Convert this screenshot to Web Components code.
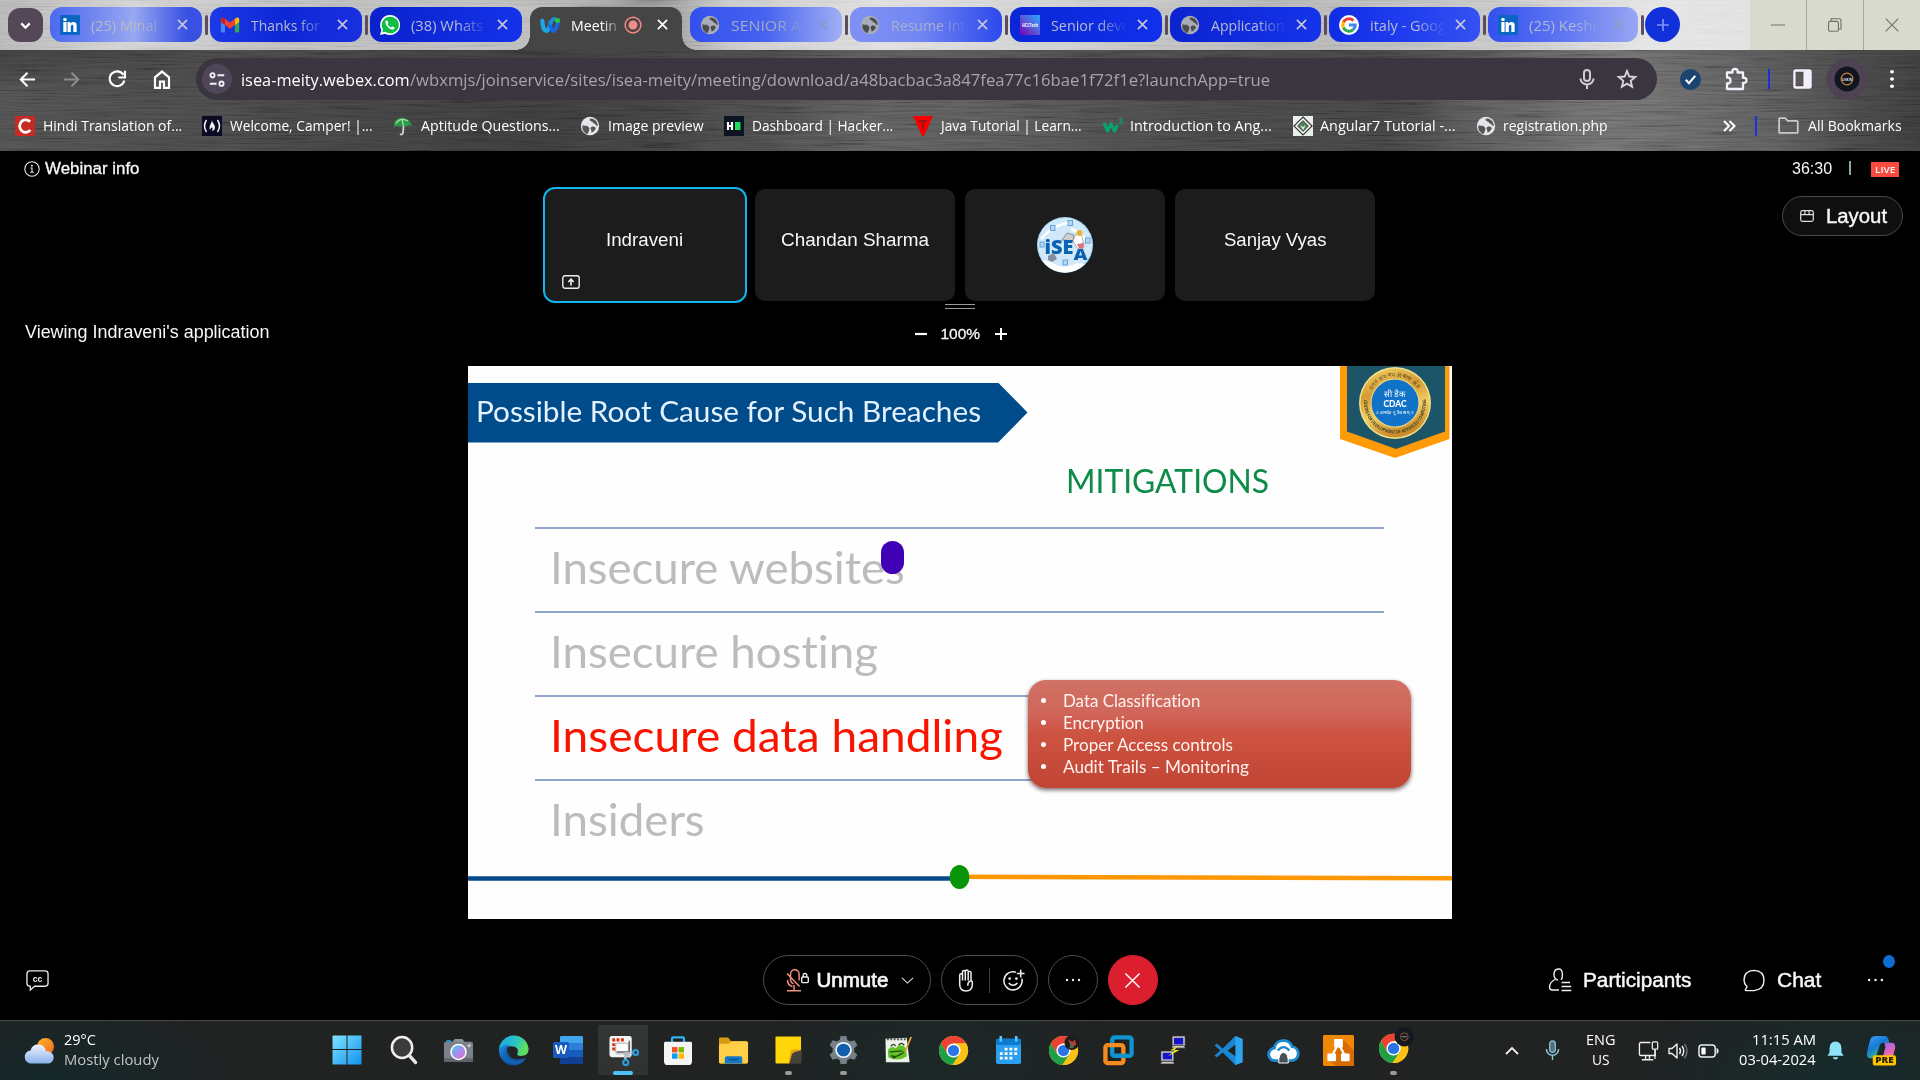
<!DOCTYPE html>
<html lang="en">
<head>
<meta charset="utf-8">
<title>Webex meeting</title>
<style>
html,body{margin:0;background:#000;overflow:hidden}
body{width:1920px;height:1080px;font-family:"Open Sans","Noto Sans",sans-serif;color:#fff}
</style>
</head>
<body>
<desktop-screen></desktop-screen>
<script>
const chromeLogo = (x='') => `<g><circle cx="16" cy="16" r="15" fill="#fbc116"/><path d="M3 8.5A15 15 0 0 1 29 8.5H16L9.5 19.7z" fill="#ea4335"/><path d="M3 8.5A15 15 0 0 0 14.8 31L22.500 19.700 9.500 19.700z" fill="#1fa047"/><path d="M16 8.500H29A15 15 0 0 1 14.800 31L22.500 19.700z" fill="#fbc116"/><circle cx="16" cy="16" r="7.300" fill="#fff"/><circle cx="16" cy="16" r="5.800" fill="#2a74e8"/></g>${x}`;
const globe = c => `<circle cx="12" cy="12" r="11" fill="${c}"/><path d="M3 11c3 1 6 0 7 2s2 2 1 4-1 4-2 4.500C4 20 2 15 3 11zM12 3c-1 2 0 3 2 3.500s1 2 3 2.500 2 3 4.500 3C21 6 17 2.500 12 3zM14 13c2-1 5 0 5 2-1 2-3 4-5 5-1-2 0-3-1-4s0-2.500 1-3z" fill="#3c3c3c" fill-opacity=".85"/>`;
const linkedin = `<rect width="24" height="24" rx="1.500" fill="#0a66c2"/><text x="2.800" y="19.800" font-family="Open Sans" font-weight="800" font-size="20" fill="#fff" textLength="18.500">in</text>`;
/* name: [viewBox, markup] */
const ICONS = {
 down:['0 0 24 24','<path d="M6 9l6 6 6-6" fill="none" stroke="#fff" stroke-width="3"/>'],
 linkedin:['0 0 24 24',linkedin],
 gmail:['0 0 24 24','<path d="M1 5v14.500q0 1.500 1.500 1.500H6V10z" fill="#4285f4"/><path d="M23 5v14.500q0 1.500-1.500 1.500H18V10z" fill="#34a853"/><path d="M18 4.500l2-1.300q3-1 3 2.300v3L18 12z" fill="#fbbc04"/><path d="M6 4.500l6 4.600 6-4.600V12l-6 4.600L6 12z" fill="#ea4335"/><path d="M1 5.500q0-3.300 3-2.300l2 1.300V12L1 8.500z" fill="#c5221f"/>'],
 whatsapp:['0 0 24 24','<path d="M12 0a12 12 0 0 0-10.300 18L0 24l6.200-1.600A12 12 0 1 0 12 0z" fill="#fff"/><path d="M12 2a10 10 0 0 0-8.400 15.300L2.700 21l3.900-1A10 10 0 1 0 12 2z" fill="#12bd45"/><path d="M8.500 6.500c-.9-.4-2.300 1-2 2.700.6 3.200 4.300 7.700 8.300 8.200 1.500.2 2.800-.8 2.900-2.200 0-.5-2.500-1.700-2.900-1.500-.4.200-1 1.300-1.400 1.300-1.200-.2-3.800-2.500-4.200-3.900 0-.4.900-1.100.9-1.600 0-.4-1-2.800-1.600-3z" fill="#fff"/>'],
 webex:['0 0 24 24','<path d="M2.800 7c.2 6 2 12 5 12S11.500 13 12.500 9" fill="none" stroke="#19a7e8" stroke-width="5" stroke-linecap="round"/><path d="M12 11c1 5 2 8 4.500 8S20.500 13 21.500 9" fill="none" stroke="#1766e8" stroke-width="5" stroke-linecap="round"/><path d="M13 10c.8-4 2.500-5.500 5-5.500" fill="none" stroke="#1b8fd8" stroke-width="4" stroke-linecap="round"/><circle cx="21" cy="6.500" r="3" fill="#21cf3f"/>'],
 rec:['0 0 24 24','<circle cx="12" cy="12" r="10.500" fill="none" stroke="#f28b82" stroke-width="2"/><circle cx="12" cy="12" r="6" fill="#f28b82"/>'],
 close:['0 0 12 12','<path d="M1 1l10 10M11 1L1 11" stroke="currentColor" stroke-width="1.900"/>'],
 globeDim:['0 0 24 24',globe('#a9adb8')],
 globe:['0 0 24 24',globe('#e6e6ea')],
 hcl:['0 0 20 20','<defs><linearGradient id="a" x1="0" y1="1" x2="1" y2="0"><stop offset="0" stop-color="#7a00b0"/><stop offset=".5" stop-color="#5a5bd8"/><stop offset="1" stop-color="#28a8ff"/></linearGradient></defs><rect width="20" height="20" fill="url(#a)"/><text x="2" y="12" font-size="4.600" font-weight="700" fill="#fff" textLength="16" lengthAdjust="spacingAndGlyphs">HCLTech</text>'],
 google:['0 0 24 24','<circle cx="12" cy="12" r="12" fill="#fff"/><g fill="none" stroke-width="3.600"><path d="M5.300 8.700A7.500 7.500 0 0 1 17.300 6.700" stroke="#ea4335"/><path d="M5.300 15.300a7.500 7.500 0 0 1 0-6.600" stroke="#fbbc05"/><path d="M5.300 15.300a7.500 7.500 0 0 0 11.700 2.300" stroke="#34a853"/><path d="M12 12h7.500a7.500 7.500 0 0 1-2.500 5.600" stroke="#4285f4"/></g>'],
 plus:['0 0 14 14','<path d="M7 1v12M1 7h12" stroke="#7f92f5" stroke-width="1.700"/>'],
 min:['0 0 14 14','<path d="M0 7h14" stroke="#6f7068" stroke-width="1"/>'],
 max:['0 0 14 14','<rect x=".6" y="3.400" width="9.800" height="9.800" rx="1.500" fill="none" stroke="#6f7068" stroke-width="1.100"/><path d="M3 3V.8h8.500q1.500 0 1.500 1.500V11h-2.500" fill="none" stroke="#6f7068" stroke-width="1.100"/>'],
 winx:['0 0 14 14','<path d="M.7.7l12.600 12.600M13.300.7L.7 13.300" stroke="#6f7068" stroke-width="1.100"/>'],
 back:['0 0 18 18','<path d="M17 9H2M9 1.800L1.800 9 9 16.200" fill="none" stroke="currentColor" stroke-width="2.100"/>'],
 reload:['0 0 18 18','<path d="M15.500 5A7.400 7.400 0 1 0 16.300 10.500" fill="none" stroke="#fff" stroke-width="2.100"/><path d="M17 .8v6.700h-6.700" fill="none" stroke="#fff" stroke-width="2.100"/>'],
 home:['0 0 18 18','<path d="M2 17V7l7-5.600L16 7v10h-5v-6H7v6z" fill="none" stroke="#fff" stroke-width="2.200"/>'],
 tune:['0 0 20 16','<g fill="none" stroke="#f1ecf5" stroke-width="2.100"><circle cx="5" cy="3.500" r="2.300"/><path d="M10.500 3.500H18M2 12.500h7.500"/><circle cx="15" cy="12.500" r="2.300"/></g>'],
 mic:['0 0 16 20','<rect x="5" y="1" width="6" height="11" rx="3" fill="none" stroke="#d0ccd4" stroke-width="2"/><path d="M1.500 9.500a6.500 6 0 0 0 13 0M8 15.500V20" fill="none" stroke="#d0ccd4" stroke-width="2"/>'],
 star:['0 0 20 20','<path d="M10 2l2.300 5.500 6 .5-4.600 3.900 1.400 5.900L10 14.600l-5.100 3.200 1.400-5.900L1.700 8l6-.5z" fill="none" stroke="#d8d4dc" stroke-width="1.900"/>'],
 check:['0 0 20 20','<circle cx="10" cy="10" r="10" fill="#1b4470"/><path d="M5.500 10.300l3 3.200 6-7" fill="none" stroke="#fff" stroke-width="2"/>'],
 puzzle:['0 0 22 22','<path d="M2 4.500h5.500q-.8-3.500 2.500-3.500t2.500 3.500H18v5.300q3.500-.4 3.500 2.500T18 14.800V21H2v-5.500q3.500.2 3.500-3T2 9.500z" fill="none" stroke="#f4effa" stroke-width="2.300" stroke-linejoin="round"/>'],
 panel:['0 0 20 20','<rect x="1.500" y="1.500" width="17" height="17" rx="1.500" fill="none" stroke="#f4effa" stroke-width="2.400"/><rect x="11" y="2" width="7.500" height="16" fill="#f4effa"/>'],
 avatar:['0 0 42 42','<circle cx="21" cy="21" r="20.500" fill="#4d4355"/><circle cx="21" cy="21" r="12.500" fill="#10151f"/><circle cx="21" cy="21" r="5.800" fill="none" stroke="#c8853a" stroke-width="1.200"/><text x="16" y="22.600" font-size="4.200" font-weight="700" fill="#dfe3ea" textLength="10" lengthAdjust="spacingAndGlyphs">LINKIN</text>'],
 kebab:['0 0 6 22','<g fill="#fff"><circle cx="3" cy="3" r="2"/><circle cx="3" cy="11" r="2"/><circle cx="3" cy="19" r="2"/></g>'],
 bC:['0 0 20 20','<rect width="20" height="20" rx="1" fill="#c62a22"/><path d="M15 5.800a6 6.200 0 1 0 .3 8.200" fill="none" stroke="#fff" stroke-width="2.800"/>'],
 fcc:['0 0 20 20','<rect width="20" height="20" fill="#0a0a23"/><path d="M4.500 4q-4 6 0 12M15.500 4q4 6 0 12" fill="none" stroke="#f2f2f2" stroke-width="1.500"/><path d="M10 4c0 3 3 4 3 7.500 0 2-1.500 3.500-3 3.500 1-1.500.5-3 0-4-.7 1.300-1.500 1.200-2 3C6.500 10 9.500 8 10 4z" fill="#f2f2f2"/>'],
 umb:['0 0 20 20','<path d="M1 11C0 5 5 1 10 2c5 .7 8 4 9 8-3-1.500-4.500-.8-5.500 1-2-1.500-3.500-1.500-6-.2C5.500 9.800 3 9.500 1 11z" fill="#2f9a47"/><path d="M3 7.500c3-5 8-5 12-2.500M9 3l1.500 7" stroke="#9fdfa8" stroke-width="1.200" fill="none"/><path d="M10.500 10l-.5 7q-.8 2.500-3 1" fill="none" stroke="#cfd6d0" stroke-width="1.800"/>'],
 hr:['0 0 20 20','<rect width="20" height="20" fill="#0b1420"/><path d="M4 6v8M8 6v8M4 10h4" stroke="#fff" stroke-width="2.200"/><rect x="11" y="6" width="5.500" height="8" fill="#1edc5a"/>'],
 java:['0 0 20 20','<path d="M0 0h20L11 20H9z" fill="#f80000"/><path d="M5.500 5h9M10 5v8" stroke="#a01010" stroke-width="2"/>'],
 w3:['0 0 20 20','<path d="M1 7l3.500 8 3.500-7 3.500 7L14.500 9" fill="none" stroke="#06a46b" stroke-width="3.200" stroke-linejoin="round"/><text x="15.500" y="8" font-size="8" font-weight="700" fill="#06a46b">3</text>'],
 ng:['0 0 20 20','<rect width="20" height="20" fill="#e9efe9"/><path d="M10 1l9 9-9 9-9-9z" fill="#fff" stroke="#333" stroke-width="1.200"/><path d="M10 4.500l5.500 5.500-5.500 5.500L4.500 10z" fill="#4e7d5c" stroke="#222" stroke-width=".7"/><path d="M7 9l3 2 3-2-3 5z" fill="#dff0e0"/>'],
 more:['0 0 12 12','<path d="M1 1l5 5-5 5M6.500 1l5 5-5 5" fill="none" stroke="#fff" stroke-width="2"/>'],
 folder:['0 0 22 18','<path d="M1.200 2.200q0-1 1-1h5.500l2.500 3h9.500q1 0 1 1v10.600q0 1-1 1H2.200q-1 0-1-1z" fill="none" stroke="#c9c9c9" stroke-width="1.900"/>'],
 info:['0 0 16 16','<circle cx="8" cy="8" r="7.200" fill="none" stroke="#e8e8e8" stroke-width="1.100"/><path d="M6.500 7H8v4.200M6.200 11.300h3.600" fill="none" stroke="#e8e8e8" stroke-width="1.100"/><circle cx="7.900" cy="4.700" r=".9" fill="#fff"/>'],
 share:['0 0 18 14','<rect x=".8" y=".8" width="16.400" height="12.400" rx="2.200" fill="none" stroke="#eee" stroke-width="1.400"/><path d="M9 10.500V5M6.300 7L9 4.200 11.700 7" fill="none" stroke="#eee" stroke-width="1.600"/>'],
 isea:['0 0 56 56','<defs><clipPath id="c"><circle cx="28" cy="28" r="27.500"/></clipPath></defs><circle cx="28" cy="28" r="28" fill="#a8d5f3"/><g clip-path="url(#c)"><circle cx="28" cy="28" r="27" fill="#cfe9fa"/><path d="M2 42q10 2 18 6t20-2l14 2v10H2z" fill="#fff"/><path d="M4 22q14-16 30-16M34 12q12 4 16 14" stroke="#fff" stroke-width="2.500" fill="none"/><g fill="#b5d8f4" stroke="#5d9cd8" stroke-width=".9"><rect x="13.500" y="8.500" width="4.500" height="5"/><rect x="31" y="3.500" width="4.500" height="5"/><rect x="48.500" y="21" width="4.500" height="5"/><rect x="3" y="25" width="4" height="5"/><rect x="26" y="43" width="4.500" height="5"/></g><path d="M25 23l5-7 7 2-1 6z" fill="#cfcfcf" stroke="#777" stroke-width=".7"/><path d="M38 19q4-4 7 0l2 11-6 2-5-8z" fill="#fff" stroke="#888" stroke-width=".6"/><circle cx="42.500" cy="16" r="3" fill="#e5b23a"/><path d="M40 27l7-1-1 6-4-1z" fill="#e0707a"/><text x="7.500" y="37" font-family="Open Sans" font-weight="800" font-size="19" fill="#0b62b0" textLength="29" lengthAdjust="spacingAndGlyphs">iSE</text><text x="36.500" y="42.500" font-family="Open Sans" font-weight="800" font-size="16" fill="#0b62b0" textLength="14" lengthAdjust="spacingAndGlyphs">A</text><path d="M11 39l6-3 3 6-5 3-4-2z" fill="#858ea0"/></g>'],
 layout:['0 0 14 12','<g fill="none" stroke="#e0e0e0" stroke-width="1.200"><rect x=".7" y=".7" width="12.600" height="10.600" rx="1.800"/><path d="M.7 4.600h12.600M4.900.7v3.900M9.100.7v3.900"/></g>'],
 minus:['0 0 12 12','<path d="M0 6h12" stroke="#fff" stroke-width="2.200"/>'],
 add:['0 0 12 12','<path d="M0 6h12M6 0v12" stroke="#fff" stroke-width="2"/>'],
 cc:['0 0 24 22','<path d="M4 1h16q3 0 3 3v10q0 3-3 3H9l-4.500 4v-4H4q-3 0-3-3V4q0-3 3-3z" fill="none" stroke="#e8e8e8" stroke-width="1.400"/><text x="7" y="12.300" font-family="Liberation Sans" font-size="10" font-weight="700" fill="#eee" textLength="10" lengthAdjust="spacingAndGlyphs">cc</text>'],
 micoff:['0 0 24 24','<g fill="none" stroke="#f09080" stroke-width="1.500"><path d="M5.500 12V6a4.300 4.300 0 0 1 8.600 0v6.500M5.500 12q.5 3 3 3.800M2.500 12c0 3 2 5.800 5 6.500M9 17v5.500M2 22.700h14M2 5.500l12.500 13"/></g><rect x="16.700" y="9" width="6.600" height="5.600" rx="1" fill="none" stroke="#eee" stroke-width="1.400"/><path d="M18.200 9V7.500a1.800 2 0 0 1 3.600 0V9" fill="none" stroke="#eee" stroke-width="1.300"/>'],
 chev:['0 0 14 8','<path d="M1 1l6 6 6-6" fill="none" stroke="#ddd" stroke-width="1.100"/>'],
 hand:['0 0 16 24','<path d="M1.700 16V6.500q0-1.500 1.400-1.500t1.400 1.500V12V3q0-1.500 1.400-1.500T7.300 3v9-9.500Q7.300 1 8.700 1t1.500 1.500V12 4q0-1.500 1.400-1.500T13 4v8.500q1.500 0 1.300 1.500v3q-.5 6-6.300 6-6.300 0-6.300-7zM12.500 12.500q-3 1-2.700 5" fill="none" stroke="#eee" stroke-width="1.500"/>'],
 smile:['0 0 24 24','<path d="M14.500 3.300A9.500 9.500 0 1 0 20.700 10" fill="none" stroke="#eee" stroke-width="1.600"/><circle cx="8" cy="10" r="1.400" fill="#eee"/><circle cx="15" cy="10" r="1.400" fill="#eee"/><path d="M7 14.500q4.500 5 9 0M19.500.8v8M15.500 4.800h8" fill="none" stroke="#eee" stroke-width="1.600"/>'],
 dots:['0 0 16 4','<g fill="#eee"><circle cx="2" cy="2" r="1.200"/><circle cx="8" cy="2" r="1.200"/><circle cx="14" cy="2" r="1.200"/></g>'],
 leave:['0 0 18 18','<path d="M1.500 1.500l15 15M16.500 1.500l-15 15" stroke="#fff" stroke-width="1.500"/>'],
 person:['0 0 24 24','<g fill="none" stroke="#eee" stroke-width="1.400"><path d="M10 12q-4-1-4-5.800T10.200 1t4.200 5.200-1.600 5M7 11.500q-5.500 3-5.500 7.500 0 3 3 3h6.500"/><path d="M13.500 14.500H22M13.500 18.500h9.800M13.500 22.500h9.800"/></g>'],
 bubble:['0 0 22 24','<path d="M3 22.500q-1 0-.5-1l1.500-3Q1 15.500 1 11.800 1 2 11 1.500q10 .5 10 10.200T11 22.500z" fill="none" stroke="#eee" stroke-width="1.400"/>'],
 weather:['0 0 32 28','<defs><linearGradient id="s" x2="1" y2="1"><stop stop-color="#ffb52b"/><stop offset="1" stop-color="#ee6a1a"/></linearGradient><linearGradient id="w" y1="0" y2="1" x2="0"><stop stop-color="#eef3fd"/><stop offset="1" stop-color="#8bb2ee"/></linearGradient></defs><circle cx="21.500" cy="9.500" r="8.500" fill="url(#s)"/><path d="M7 26.500a6 6.500 0 0 1-.5-13 8 8.500 0 0 1 15.500 1 6 6 0 1 1 3 12z" fill="url(#w)"/>'],
 win:['0 0 30 30','<defs><linearGradient id="g" x2="1" y2="1"><stop stop-color="#7fe3ff"/><stop offset="1" stop-color="#1192ee"/></linearGradient></defs><path d="M1 .5h13.500V14H.5V1zM15.500.5H29q.5 0 .5.500v13h-14zM.5 15h14v14.500H1q-.5 0-.5-.5zM15.500 15h14v14q0 .5-.5.500H15.500z" fill="url(#g)"/>'],
 search:['0 0 30 30','<circle cx="13.500" cy="12.500" r="10.500" fill="#3b3b3b" stroke="#f0f0f0" stroke-width="2.600"/><path d="M21 20.500l6.500 7" stroke="#e5e5e5" stroke-width="3.400" stroke-linecap="round"/>'],
 camera:['0 0 32 28','<defs><linearGradient id="g" x2="1" y2="1"><stop stop-color="#3bd0f0"/><stop offset=".5" stop-color="#a58df0"/><stop offset="1" stop-color="#e070c8"/></linearGradient></defs><path d="M9 6l3-4h8l3 4z" fill="#8b929a"/><path d="M3 5q0-2 3-2t3 2z" fill="#1ab0f0"/><rect x="1" y="5" width="30" height="21" rx="2" fill="#7a8189"/><rect x="1" y="22" width="30" height="4" rx="1.500" fill="#5d646b"/><circle cx="16" cy="15.500" r="8.500" fill="#fff"/><circle cx="16" cy="15.500" r="7" fill="url(#g)"/><path d="M27 7v4M25 9h4" stroke="#ddd"/>'],
 edge:['0 0 32 32','<defs><linearGradient id="a" x2="1" y2=".3"><stop stop-color="#1aa5e4"/><stop offset=".6" stop-color="#2ac5c4"/><stop offset="1" stop-color="#5ee05c"/></linearGradient><linearGradient id="b" x2="0" y2="1"><stop stop-color="#1b8fdd"/><stop offset="1" stop-color="#0f4f9e"/></linearGradient></defs><path d="M1 16A15.300 15.300 0 0 1 31.500 14q.5 6.500-6.500 7.500-6 .5-5-2.500 2-5-3-7-8-2-13 4z" fill="url(#a)"/><path d="M1 15Q5 9 12 10q-4 2-3.500 8 1 9 11 9 5 .2 9-2.500A15.500 15.500 0 0 1 16 31.500 15.500 15.500 0 0 1 1 15z" fill="url(#b)"/><path d="M12 10Q8 13 10.500 19q3 6.500 11 6 4 0 7.500-1.500Q22 33 13 29 3 24 6 15q2-4 6-5z" fill="#0d66c0" fill-opacity=".75"/>'],
 word:['0 0 30 28','<rect x="7" width="23" height="28" rx="1.500" fill="#2d7ed8"/><path d="M7 1.500Q7 0 8.500 0h20Q30 0 30 1.500V7H7z" fill="#41a5ee"/><path d="M7 14h23v7H7z" fill="#185abd"/><path d="M7 21h23v5.500q0 1.500-1.500 1.500h-20Q7 28 7 26.500z" fill="#103f91"/><rect y="6" width="16" height="16" rx="1.500" fill="#185abd"/><text x="2" y="18.200" font-size="12" font-family="Open Sans" font-weight="700" fill="#fff" textLength="12" lengthAdjust="spacingAndGlyphs">W</text>'],
 snip:['0 0 32 32','<rect x="1.500" y="1" width="23" height="22" rx="2.500" fill="#f3f4f6"/><path d="M6 16V5h11" fill="none" stroke="#dd3311" stroke-width="3.200" stroke-dasharray="3 1.600"/><rect x="8" y="8.500" width="13" height="11" rx="2" fill="#fff" stroke="#aaa"/><path d="M22 6v11.500H9" fill="none" stroke="#5d6166" stroke-width="1.600"/><path d="M18 26V19l9-1M19 19l4 4" stroke="#b7bcc4" stroke-width="2.600" fill="none"/><g fill="none" stroke="#289fe0" stroke-width="2.100"><circle cx="28.500" cy="18" r="2.600"/><circle cx="18.300" cy="28.500" r="2.600"/></g>'],
 store:['0 0 30 32','<path d="M9 8V3.500q0-1 1-1h10q1 0 1 1V8" fill="none" stroke="#2cb5f2" stroke-width="2.200"/><path d="M1 8.500Q1 7 2.500 7h25Q29 7 29 8.500V27q0 4-4 4H5q-4 0-4-4z" fill="#f4f4f4"/><path d="M9 12.500h5.500V18H9z" fill="#f05022"/><path d="M15.500 12.500H21V18h-5.500z" fill="#7db900"/><path d="M9 19h5.500v5.500H9z" fill="#00a3ee"/><path d="M15.500 19H21v5.500h-5.500z" fill="#ffb800"/>'],
 files:['0 0 32 28','<path d="M1 2Q1 .5 2.500.5h8l3 4H29q2 0 2 2V26q0 1.500-1.500 1.500h-27Q1 27.500 1 26z" fill="#d99b0f"/><path d="M1 9q0-2 2-2h8l3-2.500h15q2 0 2 2V26q0 1.500-1.500 1.500h-27Q1 27.500 1 26z" fill="#ffcf48"/><path d="M7 27.500V22q0-2 2-2h14q2 0 2 2v5.500z" fill="#1478c8"/><rect x="11" y="22.500" width="10" height="1.600" fill="#0c4f8a"/>'],
 sticky:['0 0 28 28','<path d="M1 .5h26V14L15 27.500H1.500Q.5 27.500.5 26.500V1z" fill="#ffd60a"/><path d="M27.500 13v13q0 1.500-1.500 1.500H14.500z" fill="#3e3b37"/><path d="M27.500 13.500h-8q-3 0-3.500 3l-2 11z" fill="#e8a20c"/><path d="M27.500 14.500q-9 1-10 4l-2.500 9h11q1.500 0 1.500-1.500z" fill="#45413c"/>'],
 gear:['0 0 32 32','<path d="M13 1h6l1 4.300 3 1.700 4.300-1.300 3 5.200-3.200 3.100v4l3.200 3.100-3 5.200L23 25l-3 1.700L19 31h-6l-1-4.300L9 25l-4.300 1.300-3-5.200L4.900 18v-4l-3.200-3.100 3-5.200L9 7l3-1.700z" fill="#75808b"/><circle cx="16" cy="16" r="8.500" fill="#f1f4f7"/><circle cx="16" cy="16" r="6.800" fill="#0f5fae"/>'],
 npp:['0 0 30 30','<path d="M1.500 3l22-1 3 26H2z" fill="#eef0ea"/><path d="M3 3.500h20" stroke="#555" stroke-width="2" stroke-dasharray="2 1.500"/><path d="M4 15q3-5 8-2 5-6 11 0l.5 9q-9 6-19 1z" fill="#5fc423"/><path d="M7 11q3-4 5 0m3-1q3-4 6 0M7 21q6 3 14-4M6 17l13-1M9 24l9-5" fill="none" stroke="#24451a" stroke-width="1.300"/><path d="M29 1l-6 15-1.500 3 .2-4L27 1z" fill="#e8a33b"/>'],
 chrome:['0 0 32 32',chromeLogo()],
 cal:['0 0 28 32','<rect x="1" y="3" width="26" height="28" rx="2" fill="#2a9ff0"/><rect x="1" y="3" width="26" height="7" rx="2" fill="#0d7bd0"/><path d="M6 0v6M22 0v6" stroke="#5ec8ff" stroke-width="2.600"/><g fill="#fff"><path d="M10 13h3v3h-3zM15 13h3v3h-3zM20 13h3v3h-3zM5 18h3v3H5zM10 18h3v3h-3zM15 18h3v3h-3zM20 18h3v3h-3zM5 23h3v3H5zM10 23h3v3h-3zM15 23h3v3h-3z"/></g>'],
 chromeA:['0 0 32 32',chromeLogo('<circle cx="24.500" cy="8" r="7.500" fill="#221c1c"/><path d="M21 5l4 2 3-2 1 5-5 3z" fill="#b8422e"/><path d="M24 7l3 6-5 1z" fill="#4f6b5c"/>')],
 vmware:['0 0 32 32','<rect x="9.500" y="2.500" width="20" height="19" rx="2.500" fill="none" stroke="#0e94cf" stroke-width="4.500"/><rect x="2.500" y="10.500" width="18.500" height="18.500" rx="2.500" fill="none" stroke="#f38b1e" stroke-width="4.500"/><path d="M12 21.500h13" stroke="#0e94cf" stroke-width="4.500"/>'],
 putty:['0 0 30 32','<g fill="#c9c9c9" stroke="#222" stroke-width=".8"><rect x="14" y="1" width="14" height="11"/><path d="M13 14h16l-3-3H15z"/><rect x="2" y="17" width="14" height="11"/><path d="M1 31h16l-2-3H3z"/></g><rect x="16" y="3" width="10" height="7" fill="#1414c8"/><rect x="4" y="19" width="10" height="7" fill="#1414c8"/><path d="M21 11l-9 5.500h5L9 23l13-7h-5.500z" fill="#f4ec1a"/>'],
 vscode:['0 0 32 32','<path d="M23 1l7.500 3v24L23 31 10 18 4 23l-2.500-1.500L7.500 16l-6-5.500L4 9l6 5z" fill="#1a86d2"/><path d="M23 1l7.500 3v24L23 31z" fill="#2ba5ef"/><path d="M23 10v12l-8-6z" fill="#202222"/>'],
 cloud:['0 0 32 26','<path d="M8 23.500A6.500 6.500 0 0 1 6.500 10.500 9.500 9 0 0 1 25 9a7.300 7.300 0 0 1-.5 14.500z" fill="#fff" stroke="#1a8ad0" stroke-width="3"/><path d="M10 13q6-7 12 0" fill="none" stroke="#1a8ad0" stroke-width="2.500"/><path d="M11 26q0-11 5-11t5 11z" fill="#4b4f55" stroke="#fff"/>'],
 drawio:['0 0 32 32','<rect width="32" height="32" rx="1.500" fill="#f08705"/><path d="M20 4l12 12v16H14L6 27z" fill="#d96a00"/><path d="M16 9L9 22M16 9l7 13" stroke="#fff" stroke-width="2.400"/><rect x="11.500" y="4" width="9" height="9" rx="1" fill="#fff"/><rect x="4.500" y="19" width="9" height="8" rx="1" fill="#fff"/><rect x="18.500" y="19" width="9" height="8" rx="1" fill="#fff"/>'],
 chromeB:['0 0 38 38','<g transform="translate(0 6)">'+chromeLogo()+'</g><circle cx="27" cy="10" r="10" fill="#15191f"/><circle cx="27" cy="10" r="4" fill="none" stroke="#805a38"/><path d="M24.500 10h5" stroke="#99a"/>'],
 up:['0 0 14 8','<path d="M1 7l6-6 6 6" fill="none" stroke="#eee" stroke-width="1.800"/>'],
 traymic:['0 0 16 22','<rect x="5" y="1" width="6" height="12" rx="3" fill="#55707a" stroke="#8cc9dd" stroke-width="1.300"/><path d="M1.500 9.500a6.500 6.500 0 0 0 13 0M8 16.500V21" fill="none" stroke="#8cc9dd" stroke-width="1.500"/>'],
 net:['0 0 22 20','<path d="M13 1.500H3Q1.500 1.500 1.500 3v10q0 1.500 1.500 1.500h15V9M4 18.800h12M8 15v4M12 15v4" fill="none" stroke="#f0f0f0" stroke-width="1.400"/><rect x="15" y=".8" width="5.600" height="7.400" rx="1" fill="none" stroke="#f0f0f0" stroke-width="1.300"/><path d="M17.800 8v10" stroke="#f0f0f0" stroke-width="1.300"/>'],
 vol:['0 0 20 18','<path d="M1 6.500h3L9 2v14l-5-4.500H1z" fill="none" stroke="#f0f0f0" stroke-width="1.400" stroke-linejoin="round"/><path d="M11.500 6q2 3 0 6M14 4q3.500 5 0 10" fill="none" stroke="#f0f0f0" stroke-width="1.400"/><path d="M16.500 1.800q5 7.200 0 14.400" fill="none" stroke="#777" stroke-width="1.400"/>'],
 batt:['0 0 22 14','<rect x="1" y="1" width="17" height="12" rx="3" fill="none" stroke="#f0f0f0" stroke-width="1.500"/><rect x="3.500" y="3.500" width="4.500" height="7" rx="1" fill="#fff"/><path d="M19.500 4.500q1.500 0 1.500 2.500t-1.500 2.500" fill="#fff" stroke="#fff"/>'],
 bell:['0 0 18 20','<path d="M9 .5q6.300.5 6.300 7V12l2.200 3.500H.5L2.700 12V7.500Q2.700 1 9 .5zM6 17h6q-1 2.500-3 2.500T6 17z" fill="#8fe3f9"/>'],
 copilot:['0 0 32 32','<defs><linearGradient id="a" x2=".6" y2="1"><stop stop-color="#3aa6f5"/><stop offset=".5" stop-color="#1878d8"/><stop offset="1" stop-color="#35c36f"/></linearGradient><linearGradient id="b" x2=".3" y2="1"><stop stop-color="#8b6cf2"/><stop offset=".6" stop-color="#e564b8"/><stop offset="1" stop-color="#f59a6a"/></linearGradient></defs><path d="M10 1h10q2 0 3 3l1 4h-6q-3 0-4 3l-3 10q-1 3-4 3H5q-5 0-4-6l3-12q1-5 6-5z" fill="url(#a)"/><path d="M19 8h7q5 0 4 6l-3 11q-1 4-5 4h-9q3-1 4-5l3-11z" fill="url(#b)"/><rect x="7" y="21" width="24" height="10.500" rx="2" fill="#fdc500"/><text x="9.500" y="29.300" font-size="8.600" font-family="Open Sans" font-weight="800" fill="#2a2200" textLength="19" lengthAdjust="spacingAndGlyphs">PRE</text>']
};

const define = (name, build) => customElements.define(name, class extends HTMLElement {
  constructor(){ super(); this.attachShadow({mode:'open'}); }
  connectedCallback(){ if(!this.shadowRoot.firstChild) this.shadowRoot.innerHTML = build(this); }
});
const ic = (n,w,h,s='') => `<ui-icon name="${n}" w="${w}" h="${h||w}" style="${s}"></ui-icon>`;
const tx = (t,w,fs,s='') => `<fit-text w="${w}" style="font-size:${fs}px;${s}">${t}</fit-text>`;

define('ui-icon', e => {
  const [vb,m] = ICONS[e.getAttribute('name')], w = e.getAttribute('w'), h = e.getAttribute('h');
  return `<style>:host{display:block;flex:none;width:${w}px;height:${h}px}svg{display:block;overflow:visible}</style><svg width="${w}" height="${h}" viewBox="${vb}" preserveAspectRatio="none" font-family="Open Sans">${m}</svg>`;
});

define('browser-tab', e => {
  const a = n => e.getAttribute(n), act = e.hasAttribute('active');
  return `<style>
  :host{display:flex;align-items:center;position:relative;flex:none;box-sizing:border-box;width:${a('w')}px;height:35px;margin-top:7px;padding:0 0 0 10px;border-radius:12px;background:${a('bg')};color:${a('fg')||'#b8bbd2'}}
  :host([active]){height:43px;border-radius:12px 12px 0 0;padding-bottom:8px}
  :host([sep])::after{content:"";position:absolute;right:-6px;top:8px;width:3px;height:20px;border-radius:2px;background:#5a4e5e}
  .t{flex:1;overflow:hidden;margin-left:11px;height:24px;line-height:25px;-webkit-mask:linear-gradient(90deg,#000 60%,transparent 98%)}
  :host([active]) .t{flex:none;width:52px}
  .f{position:absolute;bottom:0;width:14px;height:14px}
  .l{left:-14px;background:radial-gradient(circle at 0 0,transparent 13.500px,#444 14px)}
  .r{right:-14px;background:radial-gradient(circle at 100% 0,transparent 13.500px,#454545 14px)}
  </style>
  ${ic(a('icon'),20)}<div class="t">${tx(a('label'),a('tw'),14.5)}</div>
  ${act?ic('rec',18,18,'margin-left:1px')+'<i class="f l"></i><i class="f r"></i>':''}
  ${ic('close',11,11,act?'margin:0 14px 0 auto;color:#fff':'margin:0 14px 0 8px;color:'+(a('xc')||'#c3c6da'))}`;
});

define('bookmark-item', e => `<style>:host{display:flex;align-items:center;gap:8px;flex:none}</style>${ic(e.getAttribute('icon'),20)}${tx(e.getAttribute('label'),e.getAttribute('tw'),14.5,'margin-left:-.5px')}`);

const TABS = [
 ['linkedin','(25) Minal',66,152,'linear-gradient(90deg,#4c6af0,#7288ef 30%,#98a8f2 55%,#3851e2 90%)','#b9bbc6',1],
 ['gmail','Thanks for',69,152,'linear-gradient(90deg,#1d38e6,#0e27d4 50%,#1830e0)','',1],
 ['whatsapp','(38) Whats',72,152,'linear-gradient(90deg,#0a22cc,#1432ea)','',0],
 ['webex','Meetin',46,152,'#454545','#fff',0,1],
 ['globeDim','SENIOR AN',82,152,'linear-gradient(90deg,#3350ee,#4763f0 50%,#a0aff4)','#a3abc4',1,0,'#8d98cf'],
 ['globeDim','Resume Int',74,152,'linear-gradient(90deg,#8091f4,#7287f2 45%,#2c49ec)','#a9b1cf',1],
 ['hcl','Senior deve',78,152,'linear-gradient(90deg,#0a26d6,#1030ea)','',1],
 ['globeDim','Application',74,151,'linear-gradient(90deg,#0b24d0,#1533ea)','',1],
 ['google','italy - Goog',76,151,'linear-gradient(90deg,#0f2ce6,#2340f0 60%,#3552f2)','',1],
 ['linkedin','(25) Keshr',70,150,'linear-gradient(90deg,#3350ee,#5f76f2 50%,#98a6f3)','#b0b8d4',1,0,'#939cc0']
];
const MARKS = [['bC','Hindi Translation of...',139],['fcc','Welcome, Camper! |...',143],['umb','Aptitude Questions...',139],['globe','Image preview',96],['hr','Dashboard | Hacker...',141],['java','Java Tutorial | Learn...',141],['w3','Introduction to Ang...',142],['ng','Angular7 Tutorial -...',135],['globe','registration.php',105]];

define('browser-chrome', () => `<style>
 :host{display:block;position:relative;height:151px;overflow:hidden;background:
  linear-gradient(90deg,#3d3d3d 0,#464646 12%,#3a3a3a 28%,#474747 40%,#5a5a5a 46%,#484848 58%,#424242 72%,#6a6a6a 84%,#555 92%,#3b3b3b 100%)}
 .tex{position:absolute;left:0;top:0;width:1920px;height:151px;mix-blend-mode:overlay;opacity:.17}
 .glow{position:absolute;inset:50px 0 0 0;background:linear-gradient(90deg,#5b5b5b,transparent 14%,transparent 35%,#5c5c5c 50%,transparent 62%,transparent 74%,#6c6c6c 84%,transparent 97%);opacity:.6;-webkit-mask:linear-gradient(transparent,#000 45%,#000)}
 .sky{position:absolute;inset:0 0 auto 0;height:50px;
  background:linear-gradient(90deg,#b4b4b4 0,#d2d2d2 7%,#bdbdbd 14%,#b9b9b9 28%,#8d8d8d 34%,#c8c8c8 38%,#dedede 46%,#cfcfcf 55%,#b2b2b2 66%,#c5c5c5 78%,#e4e4e4 86%,#dadada 100%)}
 .strip{position:relative;display:flex;align-items:flex-start;height:50px;box-sizing:border-box;padding-left:8px;gap:8px}
 .btn{display:grid;place-items:center;flex:none;width:35px;height:34px;margin:8px -1px 0 0;border-radius:12px;background:#544858}
 .plus{width:35px;height:35px;border-radius:50%;background:#1230da;margin:7px 0 0 -1px}
 .win{display:flex;margin-left:auto;height:50px;background:#d9dace}
 .win div{display:grid;place-items:center;width:56px;border-left:1px solid #a9a99f}
 .win div:first-child{border:0}
 .bar{position:relative;display:flex;align-items:center;height:42px;margin-top:8px;padding-left:19px}
 .omni{display:flex;align-items:center;height:42px;width:1461px;border-radius:21px;background:#3b353f;margin-left:24px;box-sizing:border-box;padding:0 20px 0 6px}
 .site{display:grid;place-items:center;width:30px;height:30px;border-radius:50%;background:#50465a;margin-right:10px}
 .v{width:2px;height:20px;background:#1a2fe0}
 .marks{position:relative;display:flex;align-items:center;height:51px;padding:0 18px 0 15px;gap:20.600px}
 .all{display:flex;align-items:center;gap:9px}
 </style>
 <div class="glow"></div><div class="sky"></div>
 <svg class="tex"><filter id="n" x="0" y="0" width="100%" height="100%"><feTurbulence type="fractalNoise" baseFrequency=".016 .6" numOctaves="3" seed="4"/><feColorMatrix values="1.800 0 0 0 -.4 1.800 0 0 0 -.4 1.800 0 0 0 -.4 0 0 0 0 1"/></filter><rect width="1920" height="151" filter="url(#n)"/></svg>
 <div class="strip"><div class="btn">${ic('down',17)}</div>
 ${TABS.map(t=>`<browser-tab icon="${t[0]}" label="${t[1]}" tw="${t[2]}" w="${t[3]}" bg="${t[4]}" fg="${t[5]}" ${t[6]?'sep':''} ${t[7]?'active':''} ${t[8]?`xc="${t[8]}"`:''}></browser-tab>`).join('')}
 <div class="btn plus">${ic('plus',14)}</div>
 <div class="win"><div>${ic('min',14)}</div><div>${ic('max',14)}</div><div>${ic('winx',14)}</div></div></div>
 <div class="bar">${ic('back',17,17,'color:#fff')}${ic('back',17,17,'color:#8c8c8c;transform:scaleX(-1);margin-left:27px')}${ic('reload',18,18,'margin-left:28px')}${ic('home',18,19,'margin-left:27px')}
  <div class="omni" style="margin-left:25px"><div class="site">${ic('tune',18,15)}</div>${tx('isea-meity.webex.com',169,17,'color:#fff;margin-left:-1px')}${tx('/wbxmjs/joinservice/sites/isea-meity/meeting/download/a48bacbac3a847fea77c16bae1f72f1e?launchApp=true',860,17,'color:#a8a3ad')}
  ${ic('mic',16,20,'margin-left:auto')}${ic('star',20,20,'margin-left:22px')}</div>
  ${ic('check',21,21,'margin-left:23px')}${ic('puzzle',22,22,'margin-left:24px')}<div class="v" style="margin-left:21px"></div>${ic('panel',19,20,'margin-left:23px')}${ic('avatar',42,42,'margin-left:14px')}${ic('kebab',6,20,'margin-left:21px')}
 </div>
 <div class="marks">${MARKS.map(m=>`<bookmark-item icon="${m[0]}" label="${m[1]}" tw="${m[2]}"></bookmark-item>`).join('')}
 ${ic('more',12,12,'margin-left:auto')}<div class="v"></div><div class="all">${ic('folder',21,17)}${tx('All Bookmarks',94,14.5)}</div></div>`);

define('video-tile', e => `<style>
 :host{display:flex;position:relative;align-items:center;justify-content:center;box-sizing:border-box;width:200px;height:112px;border-radius:10px;background:#1c1c1c;font-family:"Liberation Sans",sans-serif;padding:0 1px 10px 0}
 :host([speaking]){outline:2.500px solid #12b5f0;outline-offset:.5px}
 :host([logo]){padding:0}
 .s{position:absolute;left:17px;bottom:12px}</style><slot></slot>${e.hasAttribute('speaking')?`<div class="s">${ic('share',18,14)}</div>`:''}`);

define('slide-view', () => {
  const row = (t,w,c='#bcbcbc') => `<div class="row" style="color:${c}">${tx(t,w,44.5,'line-height:75px')}</div>`;
  const li = (t,w) => `<li>${tx(t,w,17)}</li>`;
  return `<style>
 :host{display:flex;flex-direction:column;position:relative;width:984px;height:553px;background:#fefefe;font-family:Lato,Carlito,sans-serif;font-variant-ligatures:none;overflow:hidden}
 .head{display:flex;justify-content:space-between;height:92px}
 .ban{width:560px;height:60px;margin-top:16.500px;background:#004b8a;clip-path:polygon(0 0,530px 0,559.500px 30px,530px 60px,0 60px);box-sizing:border-box;padding-left:7.500px;color:#e4f2ff;line-height:55px}
 .badge{margin-right:2px}
 .mit{height:70px;box-sizing:border-box;padding:2px 0 0 598px;line-height:40px;color:#0c8c48}
 .rows{width:849px;margin-left:67px;margin-top:-1px}
 .row{height:84px;box-sizing:border-box;border-top:2px solid #8fa5ca;padding-left:15px}
 .foot{display:block;margin-top:-2px}
 .call{position:absolute;left:560px;top:314px;width:383px;height:108px;border-radius:18px;box-sizing:border-box;padding:10px 0 0 35px;margin:0;list-style:none;background:linear-gradient(#cf7264,#d0675c 28%,#cd5240 52%,#c04535);box-shadow:0 2px 4px rgba(60,40,40,.7);color:#fff3ee}
 li{height:22px;line-height:22px;display:flex;position:relative}
 li::before{content:"";position:absolute;left:-22px;top:8px;width:5px;height:5px;border-radius:50%;background:#fff}
 .ptr{position:absolute;left:413px;top:175px;width:23px;height:33px;border-radius:11.500px;background:#3f00b6}
 </style>
 <div class="head"><div class="ban">${tx('Possible Root Cause for Such Breaches',505,29.8)}</div>
 <svg class="badge" width="110" height="92" viewBox="0 0 110 92"><defs><linearGradient id="g" x2=".3" y2="1"><stop stop-color="#f0d468"/><stop offset=".4" stop-color="#d69c34"/><stop offset=".7" stop-color="#f2cf66"/><stop offset="1" stop-color="#c98d2c"/></linearGradient><path id="lo" d="M24.500 31A31 31 0 1 0 85.500 31"/><path id="hi" d="M30.700 26.500A26.500 26.500 0 0 1 79.300 26.500"/></defs>
 <path d="M0-2h109.500v75L55 92 0 73z" fill="#ff9a08"/><path d="M7-2h98v67.500L56 83 7 65.500z" fill="#1c5468"/>
 <circle cx="55" cy="37" r="36" fill="#f3e08c"/><circle cx="55" cy="37" r="34.500" fill="url(#g)"/><circle cx="55" cy="37" r="24.500" fill="#f0d880"/><circle cx="55" cy="37" r="23.500" fill="#1173c8"/>
 <text font-size="4.700" font-weight="700" fill="#4a4420" font-family="Open Sans"><textPath href="#lo" startOffset="3" textLength="103" lengthAdjust="spacingAndGlyphs">CENTRE FOR DEVELOPMENT OF ADVANCED COMPUTING</textPath></text>
 <text font-size="5.500" fill="#5a4420"><textPath href="#hi" startOffset="3" textLength="54">प्रगत संगणन विकास केंद्र</textPath></text>
 <text x="55" y="31" font-size="8.500" fill="#fff" text-anchor="middle" textLength="22" lengthAdjust="spacingAndGlyphs">सी डैक</text>
 <text x="55" y="40.500" font-size="8.500" font-weight="900" fill="#fff" text-anchor="middle" textLength="23" lengthAdjust="spacingAndGlyphs">CDAC</text>
 <text x="55" y="48" font-size="4.500" fill="#fff" text-anchor="middle" textLength="38" lengthAdjust="spacingAndGlyphs">॥ ज्ञानादेव तु कैवल्यम् ॥</text></svg></div>
 <div class="mit">${tx('MITIGATIONS',203,33.5)}</div>
 <div class="rows">${row('Insecure websites',355)}${row('Insecure hosting',328)}${row('Insecure data handling',453,'#f91400')}${row('Insiders',155)}</div>
 <svg class="foot" width="984" height="40" viewBox="0 0 984 40"><path d="M0 17.500h484" stroke="#044a88" stroke-width="4.600"/><path d="M492 15.800l492 1.500" stroke="#ff9703" stroke-width="4.400"/><ellipse cx="491.500" cy="16" rx="10" ry="12" fill="#089608"/></svg>
 <ul class="call">${li('Data Classification',137)}${li('Encryption',81)}${li('Proper Access controls',170)}${li('Audit Trails – Monitoring',186)}</ul>
 <div class="ptr"></div>`;
});

define('webex-stage', () => `<style>
 :host{display:flex;flex-direction:column;height:869px;background:#000;font-family:"Liberation Sans",sans-serif;color:#f7f7f7}
 .top{display:flex;height:38px;padding:0 21px 0 24px;line-height:36px}
 .live{display:grid;place-items:center;width:28px;height:15px;margin:11px 0 0 20px;background:#fa4b41}
 .mid{display:grid;grid-template-columns:1fr auto 1fr;height:112px}
 .tiles{display:flex;gap:10px}
 .lay{justify-self:end;margin:7px 17px 0 0;box-sizing:border-box;width:121px;height:40px;border:1px solid #4a4a4a;border-radius:20px;background:#0f0f0f;display:flex;align-items:center;gap:12px;padding-left:17px}
 .grip{width:30px;height:5px;margin:3px auto 0;border:solid #9a9a9a;border-width:1px 0;box-sizing:border-box}
 .view{display:grid;grid-template-columns:1fr auto 1fr;height:57px;padding:0 25px;line-height:46px}
 .zoom{display:flex;align-items:center;gap:14px;height:49px;padding-left:1px}
 slide-view{margin-left:468px}
 .ctl{display:grid;grid-template-columns:1fr auto 1fr;align-items:center;height:50px;margin-top:36px}
 .mid2{display:flex;gap:10px}
 .p{box-sizing:border-box;height:50px;min-width:50px;border:1px solid #4c4c4c;border-radius:25px;display:flex;align-items:center;justify-content:center}
 .r{display:flex;align-items:center;justify-self:end;position:relative;margin-right:36px}
 .dot{position:absolute;right:-11px;top:-13px;width:12px;height:13px;border-radius:50%;background:#0f6cd4}
 </style>
 <div class="top">${ic('info',16,16,'margin:10px 5px 0 0')}${tx('Webinar info',95,16,'font-weight:500;-webkit-text-stroke:.3px')}
 ${tx('36:30',40,16,'margin-left:auto')}<div style="width:2px;height:14px;margin:10px 0 0 17px;background:linear-gradient(90deg,#58a8d8,#c8a870)"></div><div class="live">${tx('LIVE',20,9.5,'line-height:15px;font-weight:600;font-family:Open Sans')}</div></div>
 <div class="mid"><span></span><div class="tiles"><video-tile speaking>${tx('Indraveni',77,18)}</video-tile><video-tile>${tx('Chandan Sharma',148,18)}</video-tile><video-tile logo>${ic('isea',56)}</video-tile><video-tile>${tx('Sanjay Vyas',102,18)}</video-tile></div>
 <div class="lay">${ic('layout',14,12)}${tx('Layout',61,20,'-webkit-text-stroke:.4px')}</div></div>
 <div class="grip"></div>
 <div class="view">${tx("Viewing Indraveni's application",244,17.5,'margin-left:-.5px')}<div class="zoom">${ic('minus',12)}${tx('100%',40,15.5,'-webkit-text-stroke:.3px')}${ic('add',12)}</div><span></span></div>
 <slide-view></slide-view>
 <div class="ctl">${ic('cc',23,21,'margin-left:26px')}
 <div class="mid2"><div class="p" style="width:168px;padding-left:5px">${ic('micoff',24,24)}${tx('Unmute',72,20.5,'margin-left:8px;-webkit-text-stroke:.7px')}${ic('chev',13,7,'margin-left:12px')}</div>
 <div class="p" style="width:97px;padding-left:4px">${ic('hand',16,23)}<div style="width:1px;height:25px;background:#444;margin:0 12px 0 15px"></div>${ic('smile',23,23)}</div>
 <div class="p">${ic('dots',16,4)}</div><div class="p" style="background:#dc1f2e;border-color:#dc1f2e">${ic('leave',17)}</div></div>
 <div class="r">${ic('person',24,24)}${tx('Participants',109,20,'margin-left:11px;-webkit-text-stroke:.45px')}${ic('bubble',22,23,'margin-left:51px')}${tx('Chat',44,20,'margin-left:12px;-webkit-text-stroke:.45px')}${ic('dots',17,4,'margin-left:46px')}<i class="dot"></i></div></div>`);

const APPS = [['win',30,30],['search',29,30,'s'],['camera',31,27],['edge',31,31],['word',30,28],['snip',31,31,'hot'],['store',30,31],['files',31,27],['sticky',27,28,'run'],['gear',31,30,'run'],['npp',29,28],['chrome',31,31],['cal',27,29],['chromeA',31,31],['vmware',31,31],['putty',28,30],['vscode',31,31],['cloud',31,25],['drawio',31,31],['chromeB',37,37,'run b']];
define('task-bar', () => `<style>
 :host{display:flex;height:60px;box-sizing:border-box;border-top:1px solid #4a4c4c;font-family:"Open Sans",sans-serif;background:radial-gradient(ellipse 200px 90px at 50px 60px,#15282b,transparent),radial-gradient(ellipse 200px 80px at 940px 40px,#1c2828,transparent),radial-gradient(ellipse 220px 90px at 1840px 50px,#172b2c,transparent),#212222}
 .wx{display:flex;align-items:center;gap:8px;width:295.500px;padding-left:24px;flex:none}
 .two{display:flex;flex-direction:column;line-height:20px;margin-top:-1.500px}
 .two.c{align-items:center}.two.e{align-items:flex-end}
 .app{position:relative;display:grid;place-items:center;width:55px;height:58px;box-sizing:border-box;flex:none}
 .s{margin-left:1px}
 .hot{background:linear-gradient(#343636,#303131) center/50px 50px no-repeat}
 .app i{position:absolute;bottom:4px;left:24px;width:7px;height:4px;border-radius:2px;background:#9a9a9a}
 .app.s i{display:none}
 .hot i{left:17.500px;width:20px;background:#4cc2ff}
 .b{padding:0 0 9px 7px}
 .tray{display:flex;align-items:center;margin-left:auto;padding-right:23px}
 </style>
 <div class="wx">${ic('weather',32,28)}<div class="two">${tx('29°C',32,14.5)}${tx('Mostly cloudy',95,14.5,'color:#c3c3c3')}</div></div>
 ${APPS.map(a=>`<div class="app ${a[3]||''}">${ic(a[0],a[1],a[2])}${a[3]?'<i></i>':''}</div>`).join('')}
 <div class="tray">${ic('up',14,8)}${ic('traymic',15,21,'margin-left:26px')}<div class="two c" style="margin-left:26px">${tx('ENG',30,14.5)}${tx('US',18,14.5)}</div>
 ${ic('net',21,20,'margin-left:22px')}${ic('vol',20,18,'margin-left:9px')}${ic('batt',21,14,'margin-left:10px')}
 <div class="two e" style="margin-left:20px">${tx('11:15 AM',64,14.5)}${tx('03-04-2024',77,14.5)}</div>${ic('bell',17,19,'margin-left:11px')}${ic('copilot',31,31,'margin-left:22px')}</div>`);

define('desktop-screen', () => `<style>:host{display:block;width:1920px;height:1080px}</style><browser-chrome></browser-chrome><webex-stage></webex-stage><task-bar></task-bar>`);

/* Text run stretched horizontally to an exact width; registered last so inherited fonts are in place. */
customElements.define('fit-text', class extends HTMLElement {
  connectedCallback(){
    if(this.shadowRoot) return;
    const w = +this.getAttribute('w');
    this.attachShadow({mode:'open'}).innerHTML = `<style>:host{display:block;flex:none;width:${w}px;white-space:nowrap}span{display:inline-block;transform-origin:0 50%}</style><span><slot></slot></span>`;
    const s = this.shadowRoot.querySelector('span');
    s.style.transform = `scaleX(${w / s.offsetWidth})`;
  }
});
</script>
</body>
</html>
